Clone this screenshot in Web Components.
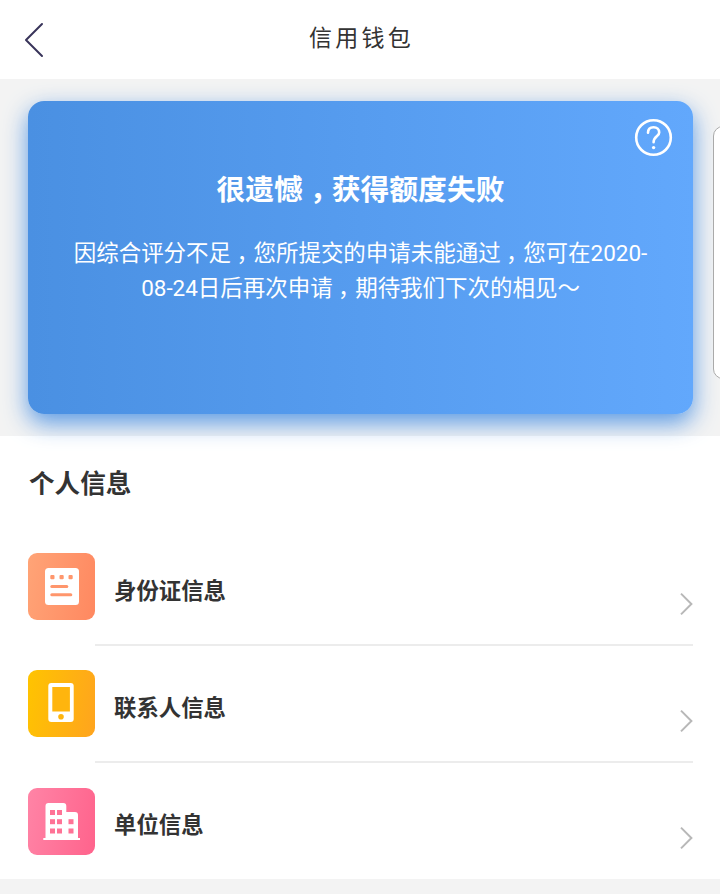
<!DOCTYPE html>
<html lang="zh-CN">
<head>
<meta charset="utf-8">
<title>信用钱包</title>
<style>
  html, body {
    margin: 0;
    height: 100%;
    overflow: hidden;
  }
  body {
    background: #f3f3f3;
    color: #333;
    font-family: Roboto, "Noto Sans CJK SC", sans-serif;
  }
</style>
</head>
<body>
<wallet-app></wallet-app>

<script>
class NavBar extends HTMLElement {
  constructor() {
    super();
    this.attachShadow({ mode: 'open' });
    this.shadowRoot.innerHTML = `
      <style>
        :host {
          display: grid;
          grid-template-columns: 60px 1fr 60px;
          align-items: center;
          height: 79px;
          background: #fff;
        }
        svg { display: block; margin-left: 23px; }
        h1 {
          margin: 0 0 7px;
          text-align: center;
          font: 400 23px/34px "AR PL UKai CN", KaiTi, "Noto Sans CJK SC", sans-serif;
          letter-spacing: 3.2px;
          text-indent: 3px;
          color: #333;
        }
      </style>
      <svg width="22" height="36" viewBox="0 0 22 36" fill="none" stroke="#39345a" stroke-width="2" stroke-linecap="round" stroke-linejoin="round">
        <path d="M19 2L3 18L19 34"/>
      </svg>
      <h1><slot></slot></h1>
    `;
  }
}

class StatusCard extends HTMLElement {
  constructor() {
    super();
    this.attachShadow({ mode: 'open' });
    this.shadowRoot.innerHTML = `
      <style>
        :host {
          display: block;
          position: relative;
          box-sizing: border-box;
          height: 313px;
          padding: 67px 40px 0;
          border-radius: 16px;
          background: linear-gradient(90deg, #4a90e2, #62a8fc);
          box-shadow: 0 9px 23px rgba(74, 144, 226, .9);
          color: #fff;
          text-align: center;
        }
        h2 {
          margin: 0 0 24px;
          font-size: 28.8px;
          line-height: 44px;
          font-weight: 700;
        }
        p {
          margin: 0;
          font-size: 22.47px;
          line-height: 35px;
          white-space: nowrap;
        }
        .help {
          position: absolute;
          top: 17px;
          right: 20px;
        }
      </style>
      <svg class="help" width="39" height="39" viewBox="0 0 39 39" fill="none" stroke="#fff" stroke-width="2.6" stroke-linecap="round">
        <circle cx="19.5" cy="19.5" r="17.3"/>
        <path d="M14 14.8C14 11.2 16.2 9.2 19.6 9.2C23 9.2 25.2 11.4 25.2 14.4C25.2 18.4 19.6 18.4 19.6 24.2"/>
        <circle cx="19.6" cy="29.6" r="1.7" fill="#fff" stroke="none"/>
      </svg>
      <h2><slot name="title"></slot></h2>
      <p><slot></slot></p>
    `;
  }
}

// Half-width comma glyph set in the middle of a full-width cell
class MidComma extends HTMLElement {
  constructor() {
    super();
    this.attachShadow({ mode: 'open' });
    this.shadowRoot.innerHTML = `
      <style>
        :host {
          display: inline-block;
          box-sizing: border-box;
          width: 1em;
          padding-left: .24em;
          line-height: 1;
          text-align: left;
          white-space: nowrap;
          font-family: "Noto Sans CJK SC", sans-serif;
          font-feature-settings: "halt";
        }
      </style><slot></slot>`;
  }
}

const ICONS = {
  id: `
    <rect x="17" y="15" width="34" height="37" rx="3.5" fill="#fff"/>
    <g fill="#ff966c">
      <rect x="22.3" y="22" width="4.2" height="4.2" rx="1"/>
      <rect x="31.5" y="22" width="4.2" height="4.2" rx="1"/>
      <rect x="40.5" y="22" width="4.2" height="4.2" rx="1"/>
      <rect x="22.3" y="32" width="18" height="3" rx="1.5"/>
      <rect x="22.3" y="40.3" width="22" height="3" rx="1.5"/>
    </g>`,
  phone: `
    <rect x="20.3" y="13" width="25.4" height="39" rx="3" fill="#fff"/>
    <rect x="24.3" y="17" width="17.6" height="24.5" fill="#ffb50e"/>
    <circle cx="33" cy="46.7" r="2.8" fill="#ffb50e"/>`,
  building: `
    <path d="M17.5 50V18Q17.5 15 20.5 15H35.3Q38.3 15 38.3 18V24H47Q50 24 50 27V50H52V52H15.3V50Z" fill="#fff"/>
    <g fill="#ff7396">
      <rect x="22" y="22" width="5" height="5"/>
      <rect x="29" y="22" width="5" height="5"/>
      <rect x="22" y="31.2" width="5" height="5"/>
      <rect x="29" y="31.2" width="5" height="5"/>
      <rect x="40.5" y="31.2" width="5" height="5"/>
      <rect x="22" y="40.5" width="5" height="5"/>
      <rect x="29" y="40.5" width="5" height="5"/>
      <rect x="40.5" y="40.5" width="5" height="5"/>
    </g>`
};

const COLORS = {
  id: ['#ffa477', '#ff8860'],
  phone: ['#ffc400', '#ffa41e'],
  building: ['#ff84a6', '#ff638c']
};

class InfoRow extends HTMLElement {
  static get observedAttributes() {
    return ['icon'];
  }

  constructor() {
    super();
    this.attachShadow({ mode: 'open' });
  }

  attributeChangedCallback() {
    this.render();
  }

  render() {
    const icon = this.getAttribute('icon');
    const [from, to] = COLORS[icon];

    this.shadowRoot.innerHTML = `
      <style>
        :host {
          display: flex;
          height: 117.3px;
          padding: 0 27px 0 28px;
        }
        :host(:last-child) { height: 116px; }
        .icon {
          display: block;
          width: 67px;
          height: 67px;
          margin-top: 24.8px;
          border-radius: 9px;
          background: linear-gradient(100deg, ${from}, ${to});
        }
        .body {
          flex: 1;
          display: flex;
          justify-content: space-between;
          box-sizing: border-box;
          padding: 45.2px 0 0 19px;
          border-bottom: 2px solid #ececec;
        }
        :host(:last-child) .body { border-bottom: none; }
        .label {
          font-size: 22.4px;
          line-height: 34px;
          font-weight: 700;
        }
        .arrow { margin-top: 18px; }
      </style>
      <svg class="icon" viewBox="0 0 67 67">${ICONS[icon]}</svg>
      <div class="body">
        <span class="label"><slot></slot></span>
        <svg class="arrow" width="14" height="24" viewBox="0 0 14 24" fill="none" stroke="#b8b8b8" stroke-width="2">
          <path d="M2 1.6L12.4 12L2 22.4"/>
        </svg>
      </div>
    `;
  }
}

class InfoSection extends HTMLElement {
  constructor() {
    super();
    this.attachShadow({ mode: 'open' });
    this.shadowRoot.innerHTML = `
      <style>
        :host { display: block; background: #fff; }
        h3 {
          margin: 0;
          padding: 29px 29px 25.4px;
          font-size: 25.6px;
          line-height: 38px;
          font-weight: 700;
        }
      </style>
      <h3><slot name="title"></slot></h3>
      <slot></slot>
    `;
  }
}

// Drawer handle that peeks in from the right edge of the screen
class SideHandle extends HTMLElement {
  constructor() {
    super();
    this.attachShadow({ mode: 'open' });
    this.shadowRoot.innerHTML = `
      <style>
        :host {
          display: block;
          position: absolute;
          top: 126px;
          right: -20px;
          width: 27px;
          height: 253px;
          box-sizing: border-box;
          border: 1px solid #aaa;
          border-radius: 10px;
          background: #fff;
        }
      </style>
    `;
  }
}

class WalletApp extends HTMLElement {
  constructor() {
    super();
    this.attachShadow({ mode: 'open' });
    this.shadowRoot.innerHTML = `
      <style>
        :host {
          display: block;
          position: relative;
          height: 100%;
          overflow: hidden;
        }
        status-card { margin: 22px 27px 22px 28px; }
      </style>
      <nav-bar>信用钱包</nav-bar>
      <status-card>
        <span slot="title">很遗憾<mid-comma>，</mid-comma>获得额度失败</span>
        因综合评分不足<mid-comma>，</mid-comma>您所提交的申请未能通过<mid-comma>，</mid-comma>您可在2020-<br>08-24日后再次申请<mid-comma>，</mid-comma>期待我们下次的相见～
      </status-card>
      <info-section>
        <span slot="title">个人信息</span>
        <info-row icon="id">身份证信息</info-row>
        <info-row icon="phone">联系人信息</info-row>
        <info-row icon="building">单位信息</info-row>
      </info-section>
      <side-handle></side-handle>
    `;
  }
}

customElements.define('nav-bar', NavBar);
customElements.define('mid-comma', MidComma);
customElements.define('status-card', StatusCard);
customElements.define('info-row', InfoRow);
customElements.define('info-section', InfoSection);
customElements.define('side-handle', SideHandle);
customElements.define('wallet-app', WalletApp);
</script>
</body>
</html>
